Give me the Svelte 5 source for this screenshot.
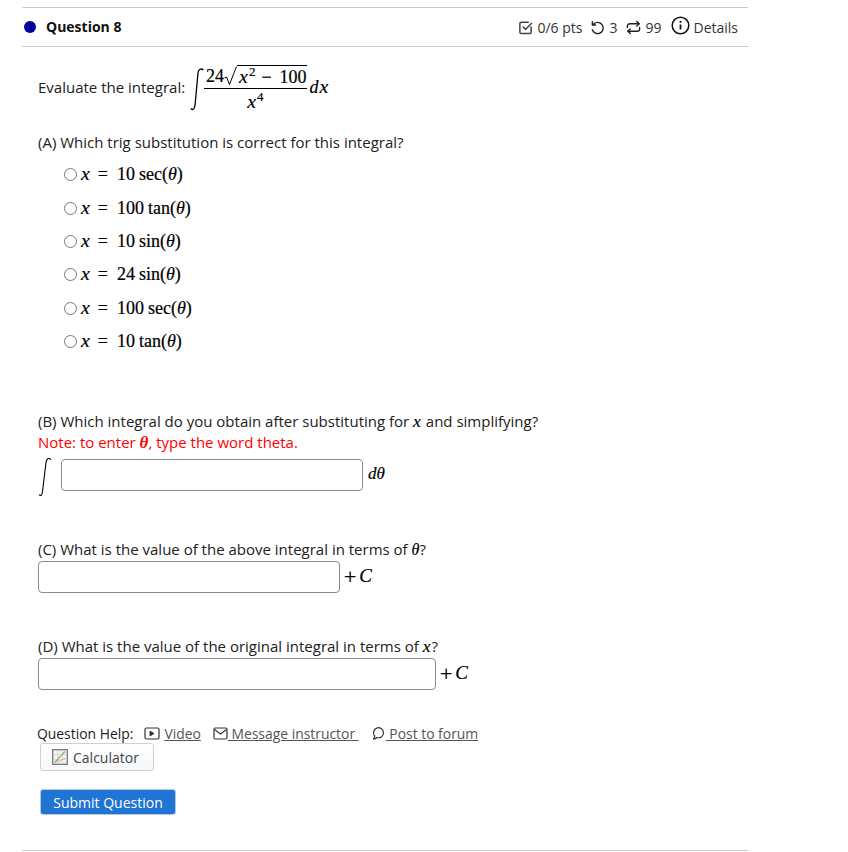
<script>
	const choices = [
		{ coef: '10', fn: 'sec' },
		{ coef: '100', fn: 'tan' },
		{ coef: '10', fn: 'sin' },
		{ coef: '24', fn: 'sin' },
		{ coef: '100', fn: 'sec' },
		{ coef: '10', fn: 'tan' }
	];
</script>

<div class="page">
	<header class="head">
		<span class="dot"></span>
		<h2 class="title">Question 8</h2>
		<div class="meta">
			<svg class="ic" width="15" height="15" viewBox="0 0 16 16" fill="none" stroke="#444" stroke-width="1.6" stroke-linecap="round" stroke-linejoin="round">
				<path d="M14 7.500V13a1.500 1.500 0 0 1-1.500 1.500h-9A1.500 1.500 0 0 1 2 13V4a1.500 1.500 0 0 1 1.500-1.500H11" />
				<path d="M5.500 7.500 8 10l6.500-6.500" />
			</svg>
			<span class="pts">0/6 pts</span>
			<svg class="ic undo" width="15" height="15" viewBox="0 0 16 16" fill="none" stroke="#222" stroke-width="1.500" stroke-linecap="round" stroke-linejoin="round">
				<path d="M3.200 5A6 6 0 1 1 2.400 10.500" />
				<path d="M2.500 1.800V5.400H6" />
			</svg>
			<span class="count">3</span>
			<svg class="ic retry" width="15" height="15" viewBox="0 0 16 16" fill="none" stroke="#222" stroke-width="1.500" stroke-linecap="round" stroke-linejoin="round">
				<path d="M1.500 8V6.500A2.500 2.500 0 0 1 4 4h10" />
				<path d="M11.500 1.500 14 4l-2.500 2.500" />
				<path d="M14.500 8v1.500A2.500 2.500 0 0 1 12 12H2" />
				<path d="M4.500 9.500 2 12l2.500 2.500" />
			</svg>
			<span class="count">99</span>
			<svg class="info" width="19" height="19" viewBox="0 0 19 19" fill="none">
				<circle cx="9.500" cy="9.500" r="8.300" stroke="#111" stroke-width="1.500" />
				<circle cx="9.500" cy="5.800" r="1.100" fill="#111" />
				<path d="M9.500 8.500v5" stroke="#111" stroke-width="1.800" />
			</svg>
			<span class="details">Details</span>
		</div>
	</header>

	<main class="body">
		<div class="evaluate">
			<span>Evaluate the integral:</span>
			<svg class="int-big" width="15" height="44" viewBox="0 0 15 44" fill="none">
				<path d="M1 41.500c1.500 2 3.500 1 4-3L8 6c.4-4 3-5 5.500-3" stroke="#000" stroke-width="1.300" />
			</svg>
			<span class="frac">
				<span class="num">24<svg class="radical" width="13" height="20" viewBox="0 0 13 20" fill="none"><path d="M0.500 12l2-1 3 7.500L12.500 0.500" stroke="#000" stroke-width="1" /></svg><span class="radicand"><i class="mi x">x</i><sup>2</sup><span class="op">−</span>100</span></span>
				<span class="den"><i class="mi x">x</i><sup>4</sup></span>
			</span>
			<span class="math dx"><i class="mi d">d</i><i class="mi x">x</i></span>
		</div>

		<p class="q-a">(A) Which trig substitution is correct for this integral?</p>
		<ul class="choices">
			{#each choices as c}
				<li>
					<span class="radio"></span>
					<span class="math"><i class="mi x wide">x</i><span class="eq">=</span>{c.coef}<span class="fn">{c.fn}</span>(<i class="mi">θ</i>)</span>
				</li>
			{/each}
		</ul>

		<p class="q-b">(B) Which integral do you obtain after substituting for <span class="math"><i class="mi x">x</i></span> and simplifying?</p>
		<p class="note">Note: to enter <b class="math"><i class="mi">θ</i></b>, type the word theta.</p>
		<div class="answer-b">
			<svg class="int-small" width="14" height="40" viewBox="0 0 14 40" fill="none">
				<path d="M1 37.500c1.500 2 3 1 3.500-3L8 5.500c.4-4 2.500-5 5-3" stroke="#000" stroke-width="1.100" />
			</svg>
			<input class="box box-b" type="text" />
			<span class="math suffix"><i class="mi">dθ</i></span>
		</div>

		<p class="q-c">(C) What is the value of the above integral in terms of <span class="math"><i class="mi">θ</i></span>?</p>
		<div class="answer">
			<input class="box box-c" type="text" />
			<span class="math plus"><span class="plus-sign">+</span><i class="mi">C</i></span>
		</div>

		<p class="q-d">(D) What is the value of the original integral in terms of <span class="math"><i class="mi x">x</i></span>?</p>
		<div class="answer">
			<input class="box box-d" type="text" />
			<span class="math plus"><span class="plus-sign">+</span><i class="mi">C</i></span>
		</div>

		<div class="help">
			<span class="help-label">Question Help:</span>
			<a href="#video" class="first">
				<svg width="16" height="13" viewBox="0 0 16 13" fill="none" stroke="#333" stroke-width="1.200"><rect x="1" y="1" width="14" height="11" rx="1.500" /><path d="M6 4v5l4-2.500z" fill="#333" stroke-width="0.800" /></svg><span class="u vid">Video</span>
			</a>
			<a href="#msg">
				<svg width="15" height="13" viewBox="0 0 15 13" fill="none" stroke="#333" stroke-width="1.200"><rect x="1" y="1" width="13" height="11" rx="1.500" /><path d="M1.500 2.500 7.500 7l6-4.500" /></svg><span class="u">&nbsp;Message instructor&nbsp;</span>
			</a>
			<a href="#forum" class="last">
				<svg width="14" height="14" viewBox="0 0 14 14" fill="none" stroke="#333" stroke-width="1.200" stroke-linejoin="round"><path d="M1.500 13c1-1 1.300-1.800 1.200-3A5 5 0 1 1 5 11.500C4 12.500 3 13 1.500 13z" /></svg><span class="u">&nbsp;Post to forum</span>
			</a>
		</div>

		<button class="calc" type="button">
			<svg width="16" height="16" viewBox="0 0 16 16" fill="none">
				<rect x="0.700" y="0.700" width="14.600" height="14.600" fill="#f3f3f3" stroke="#777" stroke-width="1.300" />
				<path d="M1 5.500h14M1 10.500h14M5.500 1v14M10.500 1v14" stroke="#ccc" stroke-width="0.600" />
				<path d="M2.500 13.500 13 2.500" stroke="#7db86a" stroke-width="1.100" />
				<path d="M3 13c4-.5 7-2 10-4" stroke="#e8a36a" stroke-width="1" />
			</svg>
			Calculator
		</button>

		<button class="submit" type="button">Submit Question</button>
	</main>
	<div class="foot"></div>
</div>

<style>
	:global(body) {
		margin: 0;
		background: #fff;
		font-family: 'Open Sans', sans-serif;
		font-size: 15px;
		color: #212121;
	}

	.page {
		width: 726px;
		margin-left: 22px;
		padding-top: 7px;
	}

	.head {
		display: flex;
		align-items: center;
		height: 38px;
		border-top: 1px solid #ccc;
		border-bottom: 1px solid #ccc;
	}

	.dot {
		width: 12px;
		height: 12px;
		margin-left: 2px;
		border-radius: 50%;
		background: #00009c;
	}

	.title {
		margin: -2px 0 0 10px;
		font-size: 14px;
		font-weight: 700;
		color: #111;
	}

	.meta {
		display: flex;
		align-items: center;
		margin-left: auto;
		padding-right: 10px;
		font-size: 14px;
		color: #333;
	}

	.ic {
		margin-right: 4px;
	}

	.ic.undo {
		margin-left: 8px;
	}

	.ic.retry {
		margin-left: 9px;
	}

	.info {
		margin: -4px 3px 0 10px;
	}

	.body {
		padding-left: 16px;
	}

	.math {
		font-family: 'Liberation Serif', serif;
		color: #000;
		-webkit-text-stroke: 0.2px #000;
	}

	.mi {
		font-family: 'Liberation Serif', serif;
		font-weight: 400;
	}

	.x {
		display: inline-block;
		font-size: 1.1em;
		line-height: 1;
		margin-right: 1px;
	}

	.x.wide {
		margin-right: 3px;
	}

	.d {
		margin-right: 1px;
	}

	.evaluate {
		display: flex;
		align-items: center;
		height: 46px;
		margin-top: 17px;
	}

	.int-big {
		margin-left: 5px;
		margin-top: 3px;
	}

	.frac {
		display: inline-flex;
		flex-direction: column;
		align-items: center;
		margin-left: -1px;
		font-family: 'Liberation Serif', serif;
		font-size: 18px;
		color: #000;
		-webkit-text-stroke: 0.2px #000;
	}

	.num {
		display: flex;
		align-items: flex-end;
		height: 25px;
		line-height: 22px;
		border-bottom: 1px solid #000;
		padding: 0 0 1px 2px;
		box-sizing: border-box;
	}

	.radicand {
		display: block;
		border-top: 1px solid #000;
		height: 21px;
		padding-left: 2px;
		white-space: nowrap;
	}

	.radical {
		margin-bottom: 1px;
	}

	.op {
		margin: 0 8px 0 6px;
	}

	.num sup, .den sup {
		font-size: 13px;
		line-height: 0;
	}

	.den {
		height: 21px;
		line-height: 27px;
	}

	.dx {
		font-size: 18px;
		margin-left: 3px;
	}

	p {
		margin: 0;
		line-height: 20px;
	}

	.q-a {
		margin-top: 22px;
	}

	.choices {
		list-style: none;
		margin: 6px 0 0;
		padding: 0 0 0 24px;
	}

	.choices li {
		display: flex;
		align-items: center;
		height: 33.400px;
		font-size: 18px;
	}

	.radio {
		width: 11px;
		height: 11px;
		border: 1px solid #767676;
		border-radius: 50%;
		margin: 0 4px 0 2px;
	}

	.eq {
		margin: 0 9px 0 5px;
	}

	.fn {
		margin: 0 0 0 4px;
	}

	.q-b {
		margin-top: 53px;
	}

	.q-b .math, .q-c .math, .q-d .math {
		font-size: 16px;
	}

	.note {
		color: #f00;
	}

	.note .math {
		color: #f00;
		font-size: 17px;
		-webkit-text-stroke: 0;
	}

	.note .mi {
		font-weight: 700;
	}

	.answer-b {
		display: flex;
		align-items: center;
		height: 34px;
		margin-top: 5px;
	}

	.int-small {
		margin: 3px 9px 0 0;
	}

	.box {
		display: block;
		box-sizing: border-box;
		height: 32px;
		margin: 0;
		padding: 0 6px;
		background: #fff;
		border: 1px solid #8a8a8a;
		border-radius: 4px;
	}

	.box-b {
		width: 302px;
	}

	.box-c {
		width: 302px;
	}

	.box-d {
		width: 398px;
	}

	.suffix {
		margin: -3px 0 0 5px;
		font-size: 17px;
	}

	.plus {
		margin: -3px 0 0 3px;
		font-size: 19px;
	}

	.plus-sign {
		font-family: 'DejaVu Serif', serif;
		font-size: 17px;
		-webkit-text-stroke: 0;
		margin-right: 2px;
	}

	.q-c {
		margin-top: 47px;
	}

	.q-d {
		margin-top: 43px;
	}

	.answer {
		display: flex;
		align-items: center;
		margin-top: 1px;
	}

	.help {
		display: flex;
		align-items: center;
		height: 20px;
		margin: 33px 0 0 -1px;
		font-size: 13.900px;
	}

	.help a {
		display: inline-flex;
		align-items: center;
		color: #555;
		text-decoration: none;
		margin-left: 12px;
	}

	.help a.first {
		margin-left: 11px;
	}

	.help a.last {
		margin-left: 13px;
	}

	.vid {
		margin-left: 4px;
	}

	.u {
		text-decoration: underline;
	}

	.calc {
		display: flex;
		align-items: center;
		gap: 5px;
		box-sizing: border-box;
		width: 114px;
		height: 28px;
		margin: 0 0 0 2px;
		padding: 0 0 0 11px;
		font: inherit;
		font-size: 14px;
		color: #444;
		background: linear-gradient(#fff, #f5f7fa);
		border: 1px solid #c9d2db;
		border-radius: 3px;
	}

	.submit {
		display: block;
		box-sizing: border-box;
		width: 136px;
		height: 26px;
		margin: 18px 0 0 2px;
		padding: 0;
		font: inherit;
		font-size: 14px;
		color: #fff;
		background: #1f74d4;
		border: 1px solid #b9c8d8;
		border-radius: 3px;
	}

	.foot {
		margin-top: 35px;
		border-top: 1px solid #ccc;
	}
</style>
